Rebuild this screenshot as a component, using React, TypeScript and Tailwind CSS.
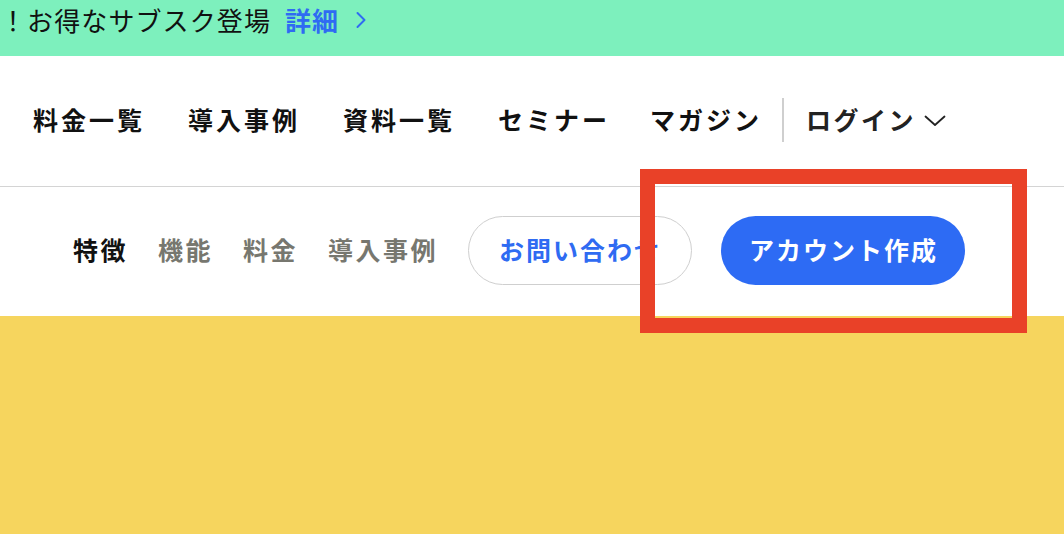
import { ChevronRight } from 'lucide-react';

const font = { fontFamily: '"Noto Sans CJK JP", "Noto Sans", sans-serif' };

export default function App() {
  const mainNav = ['料金一覧', '導入事例', '資料一覧', 'セミナー', 'マガジン'];
  const subNav = [
    { label: '特徴', active: true },
    { label: '機能' },
    { label: '料金' },
    { label: '導入事例' },
  ];

  return (
    <div className="relative w-[1064px] h-[534px] overflow-hidden bg-white" style={font}>
      {/* campaign banner */}
      <div className="h-[56px] bg-[#7df0bd] flex items-start pt-[2px]">
        <span className="text-[26px] leading-[36px] text-[#111] tracking-[1.1px] whitespace-nowrap">！お得なサブスク登場</span>
        <a className="ml-[14px] flex items-center text-[26px] leading-[36px] font-bold text-[#2f6bf2] tracking-[1px] whitespace-nowrap">
          詳細
          <ChevronRight size={28} strokeWidth={1.7} className="ml-[8px]" />
        </a>
      </div>

      {/* main nav */}
      <header className="h-[131px] border-b border-[#d4d4d4] flex items-center pl-[33px] pb-[3px]">
        <ul className="flex items-center gap-[43px]">
          {mainNav.map((item, i) => (
            <li
              key={item}
              className={`text-[25px] font-bold tracking-[3px] text-[#111] ${i === mainNav.length - 1 ? '-ml-[3px] tracking-[2px]' : ''}`}
            >
              {item}
            </li>
          ))}
        </ul>
        <div className="ml-[20px] w-[2px] h-[44px] bg-[#cfcfcf]" />
        <button className="ml-[22px] flex items-center text-[25px] font-bold tracking-[2.5px] text-[#222]">
          ログイン
          <svg width="22" height="12" viewBox="0 0 22 12" className="ml-[8px] mt-[2px]" fill="none" stroke="#222" strokeWidth="1.8" strokeLinecap="round" strokeLinejoin="round">
            <polyline points="1.5,1.5 11,10 20.5,1.5" />
          </svg>
        </button>
      </header>

      {/* sub nav */}
      <div className="h-[129px] flex items-center pl-[73px] pb-[3px]">
        <ul className="flex items-center gap-[30px]">
          {subNav.map((item) => (
            <li
              key={item.label}
              className={`text-[25px] font-bold tracking-[2.5px] ${item.active ? 'text-[#111]' : 'text-[#77776f]'}`}
            >
              {item.label}
            </li>
          ))}
        </ul>
        <button className="ml-[30px] h-[69px] w-[224px] rounded-full border border-[#cfcfcf] text-[25px] font-bold tracking-[2px] text-[#2f6bf2] text-left pl-[30px]">
          お問い合わせ
        </button>
        <button className="ml-[29px] h-[69px] w-[244px] rounded-full bg-[#2d6bf4] text-[25px] font-bold tracking-[2px] text-white text-left pl-[28px]">
          アカウント作成
        </button>
      </div>

      {/* hero */}
      <div className="h-[218px] bg-[#f6d55e]" />

      {/* highlight frame */}
      <div className="absolute left-[640px] top-[169px] w-[387px] h-[164px] border-[15px] border-[#e94128]" />
    </div>
  );
}
